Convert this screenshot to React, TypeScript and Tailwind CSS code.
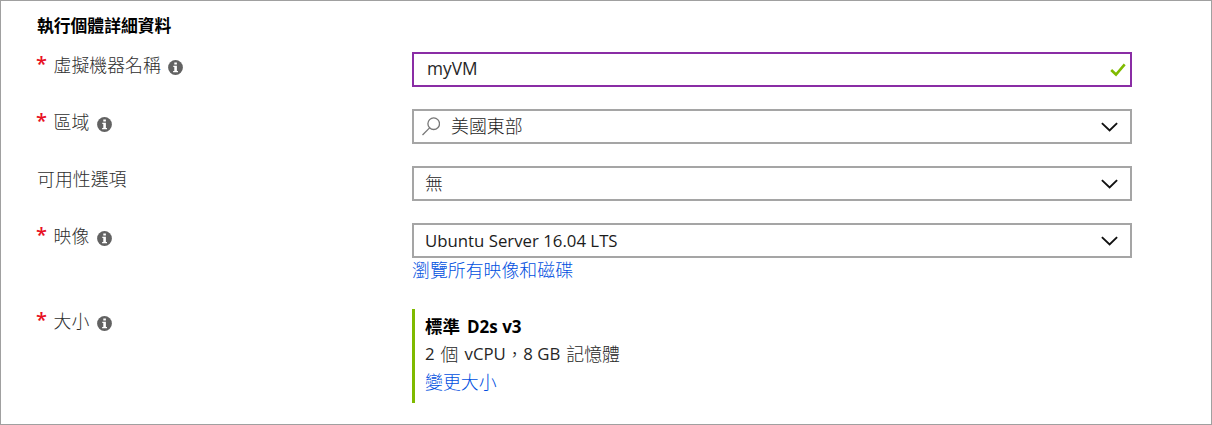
import type { ReactNode } from "react";

const latin = "font-['Open_Sans','Noto_Sans_CJK_TC',sans-serif]";

function InfoIcon() {
  return (
    <svg className="mt-[7.5px] h-[15px] w-[15px] shrink-0" viewBox="0 0 15 15">
      <circle cx="7.5" cy="7.5" r="7.4" fill="#626262" />
      <path d="M6.3 2.6h2.6v2H6.3zM5.3 5.7h3.6v5.2h1.1v1.3H5.1v-1.3h1.2V7h-1z" fill="#fff" />
    </svg>
  );
}

function Chevron() {
  return (
    <svg className="h-[10px] w-[17px]" viewBox="0 0 17 10" fill="none" stroke="#111" strokeWidth="1.9">
      <path d="M.9 1.1 8.6 8.5l7.5-7.4" />
    </svg>
  );
}

function Label({ text, required = true }: { text: string; required?: boolean }) {
  return (
    <div className="flex h-7 w-[375px] shrink-0 text-[#2e2e2e]">
      {required && (
        <span className="-ml-px -mt-[2px] w-[17.5px] text-[20px] font-semibold leading-7 text-[#e81123]">*</span>
      )}
      <span className="mr-[7.5px] text-[17.9px] font-light leading-[26px]">{text}</span>
      {required && <InfoIcon />}
    </div>
  );
}

function Select({ children }: { children: ReactNode }) {
  return (
    <div className="flex h-[35px] w-[720px] items-center justify-between border-2 border-[#a5a5a5] pl-[11px] pr-3 text-[#1c1c1c]">
      <div className="flex items-center">{children}</div>
      <Chevron />
    </div>
  );
}

export default function App() {
  return (
    <main className={`${latin} h-[425px] w-[1212px] overflow-hidden whitespace-nowrap border border-[#a0a0a0] bg-white pl-9`}>
      <h1 className="h-[51px] pt-[13px] text-[16.8px] font-bold leading-6 text-black">執行個體詳細資料</h1>

      <div className="flex h-[57px]">
        <Label text="虛擬機器名稱" />
        <div className="flex h-[35px] w-[720px] items-center justify-between border-2 border-[#8a2da5] pl-[13px] pr-1 text-[#262626]">
          <span className="pb-0.5 text-[17.3px] leading-6">myVM</span>
          <svg className="h-[14px] w-4" viewBox="0 0 16 14" fill="none" stroke="#7fba00" strokeWidth="2.6">
            <path d="M1.2 7 6 11.5 14.7 1.4" />
          </svg>
        </div>
      </div>

      <div className="flex h-[57px]">
        <Label text="區域" />
        <Select>
          <svg className="-ml-[3px] mr-[11px] h-[19px] w-[18px]" viewBox="0 0 18 19" fill="none" stroke="#777" strokeWidth="1.3">
            <circle cx="11.7" cy="6.7" r="5.8" />
            <path d="M7.6 10.9.5 18" />
          </svg>
          <span className="pb-0.5 text-[17.9px] font-light leading-6">美國東部</span>
        </Select>
      </div>

      <div className="flex h-[57px]">
        <Label text="可用性選項" required={false} />
        <Select>
          <span className="pb-0.5 text-[17.9px] font-light leading-6">無</span>
        </Select>
      </div>

      <div className="flex h-[86px]">
        <Label text="映像" />
        <div>
          <Select>
            <span className="text-[16.8px] leading-6">Ubuntu Server 16.04 LTS</span>
          </Select>
          <a className="block text-[17.9px] font-light leading-6 text-[#004fe0]">瀏覽所有映像和磁碟</a>
        </div>
      </div>

      <div className="flex">
        <div className="-mt-px">
          <Label text="大小" />
        </div>
        <div className="h-[94px] border-l-[3px] border-[#7fba00] pl-[10px] pt-[3px] leading-7">
          <div className="flex h-7 gap-[7px] text-[17px] font-bold text-black">
            <span className="text-[17.5px]">標準</span>
            <span className="pt-px">D2s v3</span>
          </div>
          <div className="flex h-7 gap-[6px] text-[16.8px] text-[#262626]">
            <span>2</span>
            <span className="text-[17.9px] font-light">個</span>
            <span className="flex">
              vCPU<span className="text-[17.5px] font-light">，</span>8 GB
            </span>
            <span className="text-[17.9px] font-light">記憶體</span>
          </div>
          <a className="block h-7 text-[17.9px] font-light text-[#004fe0]">變更大小</a>
        </div>
      </div>
    </main>
  );
}
